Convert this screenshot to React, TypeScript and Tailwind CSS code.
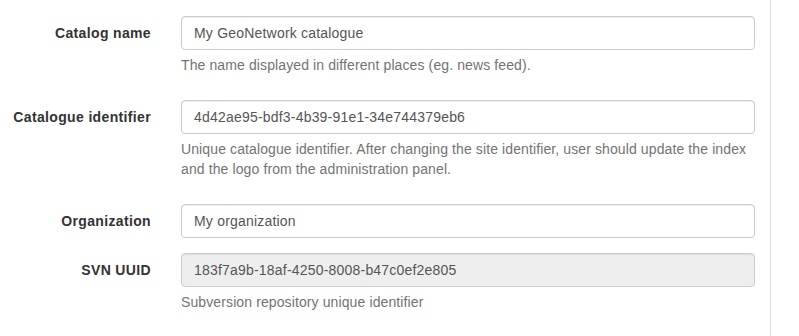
export default function App() {
  const fields = [
    {
      label: "Catalog name",
      value: "My GeoNetwork catalogue",
      help: "The name displayed in different places (eg. news feed).",
    },
    {
      label: "Catalogue identifier",
      value: "4d42ae95-bdf3-4b39-91e1-34e744379eb6",
      help: "Unique catalogue identifier. After changing the site identifier, user should update the index and the logo from the administration panel.",
    },
    { label: "Organization", value: "My organization" },
    {
      label: "SVN UUID",
      value: "183f7a9b-18af-4250-8008-b47c0ef2e805",
      help: "Subversion repository unique identifier",
      disabled: true,
    },
  ];

  return (
    <div className="min-h-screen bg-white flex font-['Liberation_Sans',Arial,sans-serif] text-[14px] leading-[20px] text-[#333]">
      <div className="w-[771px] shrink-0 border-r border-[#ddd] pt-4 h-[336px]">
        {fields.map((f) => (
          <div key={f.label} className="flex mb-[15px]">
            {/* label column */}
            <label className="w-[166px] shrink-0 pr-[15px] pt-[7px] text-right font-bold tracking-[0.35px]">
              {f.label}
            </label>
            <div className="flex-1 px-[15px]">
              <input
                readOnly
                disabled={f.disabled}
                value={f.value}
                className={
                  "block w-full h-[34px] px-3 py-[6px] border border-[#ccc] rounded-[4px] text-[#555] tracking-[0.2px] shadow-[inset_0_1px_1px_rgba(0,0,0,0.075)] outline-none " +
                  (f.disabled ? "bg-[#eee]" : "bg-white")
                }
              />
              {f.help && (
                <p className="mt-[5px] mb-[10px] text-[#737373] tracking-[0.11px]">{f.help}</p>
              )}
            </div>
          </div>
        ))}
      </div>
      <div className="flex-1" />
    </div>
  );
}
